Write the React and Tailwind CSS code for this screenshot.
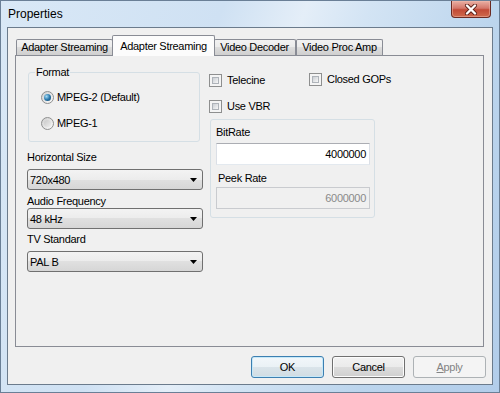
import React from 'react';

const Checkbox = ({ label, className = '' }) => (
  <label className={`flex items-center gap-[5px] h-[14px] ${className}`}>
    <span className="relative w-[13px] h-[13px] border border-[#8e8f8f] bg-[#f4f4f4] shrink-0">
      <span className="absolute inset-[2px] border border-[#aeb3b9] bg-gradient-to-br from-[#cbcfd4] to-[#f7f7f7]" />
    </span>
    <span>{label}</span>
  </label>
);

const Radio = ({ label, checked }) => (
  <label className="flex items-center gap-[3px] h-[14px]">
    <span className="w-[13px] h-[13px] rounded-full border border-[#8e8f8f] bg-gradient-to-br from-[#cfcfcf] to-[#fbfbfb] flex items-center justify-center shrink-0">
      {checked ? (
        <span className="w-[7px] h-[7px] rounded-full bg-[radial-gradient(circle_at_35%_35%,#a6dcf5,#2a79ad_50%,#0f3d62)]" />
      ) : (
        <span className="w-[7px] h-[7px] rounded-full bg-gradient-to-br from-[#c9c9c9] to-[#eeeeee]" />
      )}
    </span>
    <span>{label}</span>
  </label>
);

const Select = ({ value, className = '' }) => (
  <div className={`flex items-center h-[21px] w-[176px] rounded-[3px] border border-[#707070] bg-[linear-gradient(#f3f3f3,#ececec_50%,#e0e0e0_50%,#d6d6d6)] pl-[2px] pr-[5px] ${className}`}>
    <span className="flex-1 leading-[14px]">{value}</span>
    <svg width="7" height="4" viewBox="0 0 7 4">
      <path d="M0 0H7L3.5 4Z" fill="#000" />
    </svg>
  </div>
);

const Button = ({ children, variant }) => {
  const base = 'w-[73px] h-[22px] rounded-[3px] border flex items-center justify-center';
  if (variant === 'default')
    return (
      <div className={`${base} border-[#3c7fb1] bg-[linear-gradient(#f2f7fa,#eaf1f5_50%,#dae4ea_50%,#d0dce3)] shadow-[inset_0_0_0_1px_#c6e8f8]`}>
        {children}
      </div>
    );
  if (variant === 'disabled')
    return (
      <div className={`${base} border-[#adb2b5] bg-[#f4f4f4] text-[#838383]`}>{children}</div>
    );
  return (
    <div className={`${base} border-[#707070] bg-[linear-gradient(#f2f2f2,#ebebeb_50%,#dddddd_50%,#cfcfcf)] shadow-[inset_0_0_0_1px_#fcfcfc]`}>
      {children}
    </div>
  );
};

const Tab = ({ children, active, className = '' }) =>
  active ? (
    <div className={`relative z-10 -mb-px h-[21px] border border-b-0 border-[#898c95] bg-[#fcfcfc] rounded-t-[2px] flex items-center justify-center ${className}`}>
      {children}
    </div>
  ) : (
    <div className={`h-[16px] border border-b-0 border-[#898c95] bg-[linear-gradient(#f2f2f2,#ebebeb_50%,#dddddd_50%,#cfcfcf)] rounded-t-[2px] flex items-center justify-center ${className}`}>
      {children}
    </div>
  );

const CloseButton = () => (
  <div className="mr-[8px] w-[40px] h-[17px] rounded-b-[4px] border border-t-0 border-[#6b2a22] bg-[linear-gradient(#eab0a4,#d4776a_45%,#c24a36_55%,#cf6a4c)] shadow-[inset_0_0_0_1px_#f0b9ac80] flex items-center justify-center">
    <svg width="14" height="11" viewBox="0 0 14 11">
      <path d="M3 1.5L11 9.5M11 1.5L3 9.5" stroke="#5b1f16" strokeWidth="4" strokeLinecap="round" />
      <path d="M3 1.5L11 9.5M11 1.5L3 9.5" stroke="#ffffff" strokeWidth="2.4" strokeLinecap="round" />
    </svg>
  </div>
);

export default function App() {
  return (
    <div className="w-[500px] h-[393px] overflow-hidden flex flex-col border border-[#6a7f96] bg-[linear-gradient(110deg,#d9e8f6_0%,#cfe1f3_35%,#e4eef8_48%,#d3e4f4_58%,#bcd5ed_78%,#b2cdea_100%)] font-['Liberation_Sans',Arial,sans-serif] text-[11px] tracking-[-0.3px] text-black">
      {/* title bar */}
      <div className="h-[26px] flex items-start justify-between">
        <span className="ml-[7px] mt-[5px] text-[12px] tracking-normal leading-[16px]">Properties</span>
        <CloseButton />
      </div>

      {/* client area */}
      <div className="mx-[6px] h-[358px] border border-[#6b7b8c] bg-[#f0f0f0] flex flex-col">
        <div className="ml-[7px] mt-[7px] w-[469px]">
          <div className="flex items-end h-[20px]">
            <Tab className="ml-[1px] w-[97px]">Adapter Streaming</Tab>
            <Tab active className="-ml-px w-[103px]">Adapter Streaming</Tab>
            <Tab className="-ml-px w-[82px] border-l-0">Video Decoder</Tab>
            <Tab className="w-[87px]">Video Proc Amp</Tab>
          </div>

          <div className="h-[292px] border border-[#898c95] bg-[#f0f0f0] flex px-[11px] gap-[6px]">
            {/* left column */}
            <div className="w-[176px] flex flex-col">
              <div className="relative mt-[16px] ml-[1px] w-[172px] h-[70px] border border-[#d5dfe5] rounded-[3px] flex flex-col pt-[17px] pl-[12px] gap-[12px]">
                <span className="absolute -top-[8px] left-[6px] px-[1px] bg-[#f0f0f0] leading-[14px]">Format</span>
                <Radio label="MPEG-2 (Default)" checked />
                <Radio label="MPEG-1" />
              </div>
              <span className="mt-[8px] leading-[14px]">Horizontal Size</span>
              <Select className="mt-[5px]" value="720x480" />
              <span className="mt-[4px] leading-[14px]">Audio Frequency</span>
              <Select value="48 kHz" />
              <span className="mt-[3px] leading-[14px]">TV Standard</span>
              <Select className="mt-[5px]" value="PAL B" />
            </div>

            {/* right column */}
            <div className="flex flex-col">
              <div className="mt-[17px] flex">
                <Checkbox className="w-[100px]" label="Telecine" />
                <Checkbox label="Closed GOPs" className="gap-[3px] -mt-px" />
              </div>
              <Checkbox className="mt-[12px] gap-[3px]" label="Use VBR" />
              <div className="mt-[6px] ml-[1px] w-[165px] h-[99px] border border-[#d5dfe5] rounded-[3px] flex flex-col px-[5px] pt-[5px]">
                <span className="leading-[14px]">BitRate</span>
                <div className="mt-[4px] w-[154px] h-[22px] border border-[#abadb3] border-x-[#dbdfe6] border-b-[#e3e9ef] bg-white flex items-center justify-end pr-[3px]">
                  4000000
                </div>
                <span className="mt-[6px] ml-[2px] leading-[14px]">Peek Rate</span>
                <div className="mt-[2px] w-[154px] h-[22px] border border-[#c9cbcf] bg-[#f0f0f0] text-[#8a8a8a] flex items-center justify-end pr-[3px]">
                  6000000
                </div>
              </div>
            </div>
          </div>
        </div>

        <div className="flex justify-end gap-[8px] mt-[9px] mr-[6px]">
          <Button variant="default">OK</Button>
          <Button>Cancel</Button>
          <Button variant="disabled">
            <span><span className="underline">A</span>pply</span>
          </Button>
        </div>
      </div>
    </div>
  );
}
